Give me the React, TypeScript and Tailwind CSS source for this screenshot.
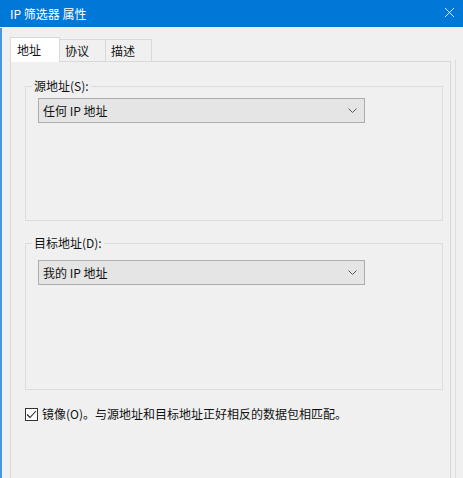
import { X } from 'lucide-react'

const font = "font-['Microsoft_YaHei_UI','Noto_Sans_CJK_SC',sans-serif]"

function Select({ value, className }: { value: string; className: string }) {
  return (
    <div
      className={`ml-[12px] flex h-[25px] w-[327px] items-center justify-between border border-[#adadad] bg-[#e5e5e5] pl-[4px] pr-[6px] text-[12px] text-[#111] ${className}`}
    >
      <span>{value}</span>
      <svg width="9" height="5" viewBox="0 0 9 5" className="mr-[1px]">
        <path d="M0.5 0.5 L4.5 4.5 L8.5 0.5" fill="none" stroke="#5a5a5a" strokeWidth="1" />
      </svg>
    </div>
  )
}

export default function App() {
  const tabs = ['地址', '协议', '描述']

  return (
    <div className={`flex h-[478px] w-[463px] flex-col overflow-hidden bg-[#f0f0f0] ${font}`}>
      {/* Title bar */}
      <div className="flex h-[27px] shrink-0 items-center justify-between bg-[#0078d7] pl-[10px] pr-[5px] text-white">
        <span className="text-[12px] leading-none">IP 筛选器 属性</span>
        <X size={17} strokeWidth={1.2} className="-mt-[3px]" />
      </div>
      <div className="h-px shrink-0 bg-[#f3ede2]" />

      {/* Body */}
      <div className="flex flex-1 flex-col border-l-2 border-[#4a95dd] pl-[8px] pt-[9px]">
        {/* Tabs */}
        <div className="flex h-[24px] items-end text-[12px] text-[#111]">
          {tabs.map((t, i) =>
            i === 0 ? (
              <div
                key={t}
                className="relative z-10 -mb-px flex h-[25px] w-[50px] items-center border border-b-0 border-[#d9d9d9] bg-white pl-[6px]"
              >
                {t}
              </div>
            ) : (
              <div
                key={t}
                className="flex h-[22px] w-[46px] items-center border border-b-0 border-l-0 border-[#d9d9d9] bg-[#f0f0f0] pl-[5px]"
              >
                {t}
              </div>
            ),
          )}
        </div>

        {/* Tab page */}
        <div className="flex flex-1">
          <div className="flex w-[441px] flex-col border border-b-0 border-[#d9d9d9] bg-[#f0f0f0]">
            <fieldset className="ml-[14px] mt-[16px] h-[143px] w-[418px] min-w-0 border border-[#dcdcdc]">
              <legend className="ml-[6px] px-[2px] text-[12px] leading-[16px] text-[#111]">源地址(S):</legend>
              <Select value="任何 IP 地址" className="mt-[4px]" />
            </fieldset>

            <fieldset className="ml-[14px] mt-[14px] h-[155px] w-[418px] min-w-0 border border-[#dcdcdc]">
              <legend className="ml-[6px] px-[2px] text-[12px] leading-[16px] text-[#111]">目标地址(D):</legend>
              <Select value="我的 IP 地址" className="mt-[9px]" />
            </fieldset>

            <label className="ml-[14px] mt-[16px] flex items-center text-[12px] leading-[16px] text-[#111]">
              <span className="flex h-[13px] w-[13px] items-center justify-center border border-[#333] bg-white">
                <svg width="11" height="9" viewBox="0 0 11 9">
                  <path d="M1 4.5 L4 7.5 L10 1" fill="none" stroke="#222" strokeWidth="1.1" />
                </svg>
              </span>
              <span className="ml-[4px]">镜像(O)。与源地址和目标地址正好相反的数据包相匹配。</span>
            </label>
          </div>
          <div className="ml-[4px] mt-[-2px] w-px bg-[#dedede]" />
        </div>
      </div>
    </div>
  )
}
